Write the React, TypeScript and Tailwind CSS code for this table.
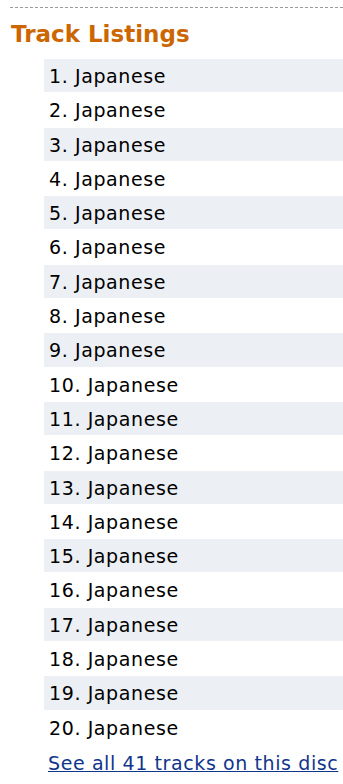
import React from "react";

export default function App() {
  const tracks = Array.from({ length: 20 }, (_, i) => i + 1);
  return (
    <div
      className="w-[343px] h-[784px] bg-white overflow-hidden"
      style={{ fontFamily: '"DejaVu Sans", Verdana, sans-serif' }}
    >
      <div className="ml-[10px] pt-[7px]">
        <div className="border-t border-dashed border-[#9a9a9a]" />
      </div>
      <h2 className="mt-[12px] pl-[11px] text-[23px] leading-[28px] font-bold text-[#cc6600]">
        Track Listings
      </h2>
      <div className="mt-[11px] ml-[44px]">
        {tracks.map((n) => (
          <div key={n} className="h-[34.3px]">
            <div
              className={`h-[33.3px] pl-[5px] text-[19px] tracking-[0.6px] leading-[34px] text-black ${
                n % 2 === 1 ? "bg-[#eceff4]" : "bg-white"
              }`}
            >
              {n}. Japanese
            </div>
          </div>
        ))}
        <a
          href="#"
          className="block pt-[2px] pl-[4px] text-[19px] tracking-[0.6px] leading-[33px] text-[#10358c] underline"
        >
          See all 41 tracks on this disc
        </a>
      </div>
    </div>
  );
}
